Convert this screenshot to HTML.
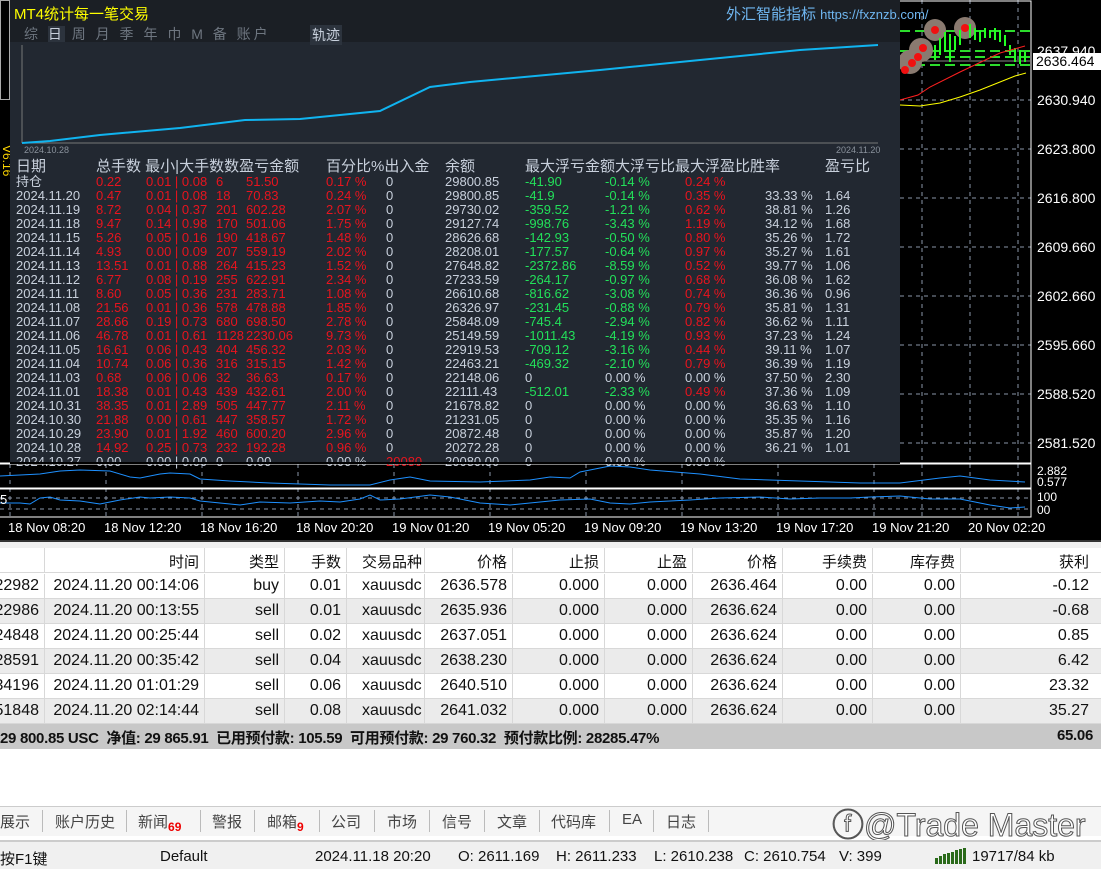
<!DOCTYPE html>
<html><head><meta charset="utf-8"><style>
*{margin:0;padding:0;box-sizing:border-box}
body{width:1101px;height:869px;overflow:hidden;background:#fff;position:relative;font-family:"Liberation Sans","Noto Sans CJK SC",sans-serif}
.a{position:absolute;white-space:nowrap}
.chart{left:0;top:0;width:1101px;height:540px;background:#000}
.px{color:#fff;font-size:14px;left:1037px}
.tl{color:#fff;font-size:13px;top:520px}
.st{font-size:13px;line-height:14px;color:#c8d0dc}
.r{color:#e8141e}.g{color:#22e05a}
.row{position:absolute;left:0;width:1101px;height:25px;border-bottom:1px solid #d8d8d8;font-size:16px;color:#111}
.row span{position:absolute;top:3px;text-align:right}
.tab{font-size:15px;color:#444;top:811px}
.sep{position:absolute;top:810px;width:1px;height:22px;background:#bbb}
.sb{font-size:15px;color:#111;top:848px}
</style></head><body>
<div class="a chart"></div>
<svg class="a" style="left:0;top:0" width="1101" height="540">
<g stroke="#8a96a8" stroke-dasharray="4,4" stroke-width="1">
<line x1="900" y1="100" x2="1031" y2="100"/><line x1="900" y1="149" x2="1031" y2="149"/><line x1="900" y1="198" x2="1031" y2="198"/><line x1="900" y1="247" x2="1031" y2="247"/><line x1="900" y1="296" x2="1031" y2="296"/><line x1="900" y1="345" x2="1031" y2="345"/><line x1="900" y1="394" x2="1031" y2="394"/><line x1="900" y1="443" x2="1031" y2="443"/>
<line x1="922" y1="0" x2="922" y2="517"/><line x1="970" y1="0" x2="970" y2="517"/><line x1="1018" y1="0" x2="1018" y2="517"/>
<line x1="10" y1="464" x2="10" y2="517"/><line x1="106" y1="464" x2="106" y2="517"/><line x1="202" y1="464" x2="202" y2="517"/><line x1="298" y1="464" x2="298" y2="517"/><line x1="394" y1="464" x2="394" y2="517"/><line x1="490" y1="464" x2="490" y2="517"/><line x1="586" y1="464" x2="586" y2="517"/><line x1="682" y1="464" x2="682" y2="517"/><line x1="778" y1="464" x2="778" y2="517"/><line x1="874" y1="464" x2="874" y2="517"/>
<line x1="0" y1="498" x2="1031" y2="498"/><line x1="0" y1="509" x2="1031" y2="509"/>
</g>
<g stroke="#fff" fill="none"><rect x="-1" y="1" width="1032" height="462"/><rect x="-1" y="464" width="1032" height="24"/><rect x="-1" y="489" width="1032" height="28"/></g>
<line x1="900" y1="61" x2="1031" y2="61" stroke="#888"/>
<g stroke="#2cdc2c" stroke-width="2" stroke-dasharray="10,5"><line x1="900" y1="31" x2="1031" y2="31"/><line x1="900" y1="51" x2="1031" y2="51"/><line x1="900" y1="57" x2="1031" y2="57"/><line x1="900" y1="65" x2="1031" y2="65"/></g>
<g fill="#8a7a70"><circle cx="935" cy="30" r="11"/><circle cx="965" cy="28" r="11"/><circle cx="921" cy="50" r="12"/><circle cx="910" cy="62" r="12"/></g>
<g stroke="#22ff22" stroke-width="2">
<line x1="935" y1="45" x2="935" y2="60"/><line x1="940" y1="38" x2="940" y2="55"/><line x1="945" y1="32" x2="945" y2="52"/><line x1="950" y1="34" x2="950" y2="62"/><line x1="955" y1="36" x2="955" y2="50"/><line x1="960" y1="30" x2="960" y2="45"/><line x1="970" y1="24" x2="970" y2="38"/><line x1="975" y1="28" x2="975" y2="40"/><line x1="980" y1="30" x2="980" y2="42"/><line x1="985" y1="28" x2="985" y2="38"/><line x1="990" y1="30" x2="990" y2="38"/><line x1="995" y1="28" x2="995" y2="40"/><line x1="1000" y1="30" x2="1000" y2="42"/><line x1="1005" y1="35" x2="1005" y2="46"/><line x1="1010" y1="45" x2="1010" y2="55"/><line x1="1015" y1="48" x2="1015" y2="62"/><line x1="1020" y1="50" x2="1020" y2="64"/><line x1="1025" y1="52" x2="1025" y2="62"/></g>
<g fill="#f01010"><circle cx="935" cy="30" r="4"/><circle cx="965" cy="28" r="4"/><circle cx="923" cy="48" r="4"/><circle cx="918" cy="57" r="4"/><circle cx="912" cy="63" r="4"/><circle cx="905" cy="70" r="4"/></g>
<polyline fill="none" stroke="#ff2020" points="900,100 918,95 930,87 960,72 1000,53 1025,46"/>
<polyline fill="none" stroke="#ffff00" points="900,105 920,106 940,103 960,97 980,90 1000,82 1015,76 1026,73"/>
<polyline fill="none" stroke="#1e90ff" points="0,476 40,474 60,471 80,470 110,471 130,477 140,478 160,474 170,473 190,474 200,479 230,481 270,483 330,485 370,485 390,480 410,477 430,481 480,482 530,480 550,477 570,478 580,472 610,466 630,467 650,470 700,474 740,479 800,481 860,483 900,483 940,478 960,476 990,480 1025,482"/>
<polyline fill="none" stroke="#1e90ff" points="0,503 20,503 30,504 40,498 50,497 60,500 80,501 100,504 120,500 140,497 150,498 170,497 190,498 200,501 220,503 240,505 260,502 290,503 320,501 340,502 360,499 370,495 380,500 400,499 430,495 450,497 480,503 510,505 540,502 560,500 590,499 610,503 630,504 650,502 690,500 720,498 760,497 790,499 820,498 850,498 870,497 900,496 930,499 960,499 990,505 1010,508 1025,507"/>
<line x1="0" y1="517" x2="1031" y2="517" stroke="#fff"/>
</svg>
<div class="a px" style="top:43px">2637.940</div>
<div class="a" style="left:1033px;top:53px;width:68px;height:17px;background:#fff;color:#000;font-size:14px;padding-left:3px">2636.464</div>
<div class="a px" style="top:92px">2630.940</div>
<div class="a px" style="top:141px">2623.800</div>
<div class="a px" style="top:190px">2616.800</div>
<div class="a px" style="top:239px">2609.660</div>
<div class="a px" style="top:288px">2602.660</div>
<div class="a px" style="top:337px">2595.660</div>
<div class="a px" style="top:386px">2588.520</div>
<div class="a px" style="top:435px">2581.520</div>
<div class="a px" style="top:466px;font-size:12px;line-height:11px">2.882<br>0.577</div>
<div class="a px" style="top:491px;font-size:12px;line-height:13px">100<br>00</div>
<div class="a tl" style="left:8px">18 Nov 08:20</div><div class="a tl" style="left:104px">18 Nov 12:20</div><div class="a tl" style="left:200px">18 Nov 16:20</div><div class="a tl" style="left:296px">18 Nov 20:20</div><div class="a tl" style="left:392px">19 Nov 01:20</div><div class="a tl" style="left:488px">19 Nov 05:20</div><div class="a tl" style="left:584px">19 Nov 09:20</div><div class="a tl" style="left:680px">19 Nov 13:20</div><div class="a tl" style="left:776px">19 Nov 17:20</div><div class="a tl" style="left:872px">19 Nov 21:20</div><div class="a tl" style="left:968px">20 Nov 02:20</div>
<div class="a" style="left:0;top:492px;color:#fff;font-size:13px">5</div>
<div class="a" style="left:0;top:0;width:10px;height:100px;border:1px solid #aaa;background:#000"></div>
<div class="a" style="left:0;top:145px;color:#ffd700;font-size:12px;writing-mode:vertical-rl">V6.16</div>
<div class="a" style="left:10px;top:0;width:890px;height:462px;background:#222831"></div>
<div class="a" style="left:10px;top:0;width:890px;height:42px;background:#1b1f25"></div>
<div class="a" style="left:14px;top:3px;color:#ffff00;font-size:15px">MT4统计每一笔交易</div>
<div class="a" style="left:24px;top:24px;color:#6e7680;font-size:14px;letter-spacing:3px">综 <span style="background:#2c333d;color:#c8d0dc">日</span> 周 月 季 年 巾 M 备 账户</div>
<div class="a" style="left:310px;top:25px;color:#c8d0dc;font-size:14px;background:#2c333d;padding:0 2px">轨迹</div>
<div class="a" style="left:726px;top:3px;color:#6fb6f0;font-size:15px">外汇智能指标 <span style="font-size:13px">https://fxznzb.com/</span></div>
<svg class="a" style="left:0;top:0" width="900" height="160">
<line x1="22" y1="45" x2="22" y2="143" stroke="#777"/><line x1="22" y1="143" x2="878" y2="143" stroke="#777"/>
<polyline fill="none" stroke="#10b4f0" stroke-width="2" points="22,143 50,141 100,135 180,128 245,120 300,119 380,111 430,87 470,82 600,70 700,60 800,50 878,45"/>
</svg>
<div class="a" style="left:24px;top:145px;color:#8a929c;font-size:9px">2024.10.28</div>
<div class="a" style="left:836px;top:145px;color:#8a929c;font-size:9px">2024.11.20</div>
<div class="a st" style="left:16px;top:159px;font-size:15px;line-height:15px">日期</div>
<div class="a st" style="left:96px;top:159px;font-size:15px;line-height:15px">总手数 最小|大手数数盈亏金额</div>
<div class="a st" style="left:326px;top:159px;font-size:15px;line-height:15px">百分比%出入金</div>
<div class="a st" style="left:445px;top:159px;font-size:15px;line-height:15px">余额</div>
<div class="a st" style="left:525px;top:159px;font-size:15px;line-height:15px">最大浮亏金额大浮亏比最大浮盈比胜率</div>
<div class="a st" style="left:825px;top:159px;font-size:15px;line-height:15px">盈亏比</div>
<div id="S"></div>
<script>
var d=[["持仓","0.22","0.01 | 0.08","6","51.50","0.17 %","0","29800.85","-41.90","-0.14 %","0.24 %","",""],
["2024.11.20","0.47","0.01 | 0.08","18","70.83","0.24 %","0","29800.85","-41.9","-0.14 %","0.35 %","33.33 %","1.64"],
["2024.11.19","8.72","0.04 | 0.37","201","602.28","2.07 %","0","29730.02","-359.52","-1.21 %","0.62 %","38.81 %","1.26"],
["2024.11.18","9.47","0.14 | 0.98","170","501.06","1.75 %","0","29127.74","-998.76","-3.43 %","1.19 %","34.12 %","1.68"],
["2024.11.15","5.26","0.05 | 0.16","190","418.67","1.48 %","0","28626.68","-142.93","-0.50 %","0.80 %","35.26 %","1.72"],
["2024.11.14","4.93","0.00 | 0.09","207","559.19","2.02 %","0","28208.01","-177.57","-0.64 %","0.97 %","35.27 %","1.61"],
["2024.11.13","13.51","0.01 | 0.88","264","415.23","1.52 %","0","27648.82","-2372.86","-8.59 %","0.52 %","39.77 %","1.06"],
["2024.11.12","6.77","0.08 | 0.19","255","622.91","2.34 %","0","27233.59","-264.17","-0.97 %","0.68 %","36.08 %","1.62"],
["2024.11.11","8.60","0.05 | 0.36","231","283.71","1.08 %","0","26610.68","-816.62","-3.08 %","0.74 %","36.36 %","0.96"],
["2024.11.08","21.56","0.01 | 0.36","578","478.88","1.85 %","0","26326.97","-231.45","-0.88 %","0.79 %","35.81 %","1.31"],
["2024.11.07","28.66","0.19 | 0.73","680","698.50","2.78 %","0","25848.09","-745.4","-2.94 %","0.82 %","36.62 %","1.11"],
["2024.11.06","46.78","0.01 | 0.61","1128","2230.06","9.73 %","0","25149.59","-1011.43","-4.19 %","0.93 %","37.23 %","1.24"],
["2024.11.05","16.61","0.06 | 0.43","404","456.32","2.03 %","0","22919.53","-709.12","-3.16 %","0.44 %","39.11 %","1.07"],
["2024.11.04","10.74","0.06 | 0.36","316","315.15","1.42 %","0","22463.21","-469.32","-2.10 %","0.79 %","36.39 %","1.19"],
["2024.11.03","0.68","0.06 | 0.06","32","36.63","0.17 %","0","22148.06","0","0.00 %","0.00 %","37.50 %","2.30"],
["2024.11.01","18.38","0.01 | 0.43","439","432.61","2.00 %","0","22111.43","-512.01","-2.33 %","0.49 %","37.36 %","1.09"],
["2024.10.31","38.35","0.01 | 2.89","505","447.77","2.11 %","0","21678.82","0","0.00 %","0.00 %","36.63 %","1.10"],
["2024.10.30","21.88","0.00 | 0.61","447","358.57","1.72 %","0","21231.05","0","0.00 %","0.00 %","35.35 %","1.16"],
["2024.10.29","23.90","0.01 | 1.92","460","600.20","2.96 %","0","20872.48","0","0.00 %","0.00 %","35.87 %","1.20"],
["2024.10.28","14.92","0.25 | 0.73","232","192.28","0.96 %","0","20272.28","0","0.00 %","0.00 %","36.21 %","1.01"],
["2024.10.27","0.00","0.00 | 0.00","0","0.00","0.00 %","20080","20080.00","0","0.00 %","0.00 %","",""]];
var xs=[16,96,146,216,246,326,386,445,525,605,685,765,825],h="";
d.forEach(function(r,i){var y=175+i*14;r.forEach(function(t,j){var c="";
if(j>=1&&j<=5)c="r";if(j==6&&t!="0")c="r";if((j==8||j==9)&&t!="0"&&t!="0.00 %")c="g";if(j==10&&t!="0.00 %")c="r";
if(i==20&&j<6)c="";
h+='<div class="a st '+c+'" style="left:'+xs[j]+'px;top:'+y+'px">'+t+'</div>';});});
document.getElementById("S").innerHTML=h;
</script>
<div class="a" style="left:10px;top:462px;width:890px;height:2px;background:#000"></div>
<div class="a" style="left:0;top:540px;width:1101px;height:8px;background:#f0f0f0;border-top:2px solid #333"></div>
<div id="T"></div>
<script>
var cols=[44,204,284,346,424,512,604,692,782,872,960,1094];
var hd=["","时间","类型","手数","交易品种","价格","止损","止盈","价格","手续费","库存费","获利"];
var rows=[["22982","2024.11.20 00:14:06","buy","0.01","xauusdc","2636.578","0.000","0.000","2636.464","0.00","0.00","-0.12"],
["22986","2024.11.20 00:13:55","sell","0.01","xauusdc","2635.936","0.000","0.000","2636.624","0.00","0.00","-0.68"],
["24848","2024.11.20 00:25:44","sell","0.02","xauusdc","2637.051","0.000","0.000","2636.624","0.00","0.00","0.85"],
["28591","2024.11.20 00:35:42","sell","0.04","xauusdc","2638.230","0.000","0.000","2636.624","0.00","0.00","6.42"],
["34196","2024.11.20 01:01:29","sell","0.06","xauusdc","2640.510","0.000","0.000","2636.624","0.00","0.00","23.32"],
["51848","2024.11.20 02:14:44","sell","0.08","xauusdc","2641.032","0.000","0.000","2636.624","0.00","0.00","35.27"]];
function mk(r,y,bg,hdr){var s='<div class="row" style="top:'+y+'px;background:'+bg+(hdr?';font-size:15px':'')+'">';var p=-10;
r.forEach(function(t,j){var R=cols[j];
if(j==4)s+='<span style="left:'+(p+16)+'px;text-align:left">'+t+'</span>';else s+='<span style="right:'+(1101-R+5)+'px">'+t+'</span>';
if(j<11)s+='<i style="position:absolute;left:'+R+'px;top:0;width:1px;height:25px;background:#d8d8d8"></i>';p=R;});return s+'</div>';}
var o=mk(hd,548,"#fff",1);rows.forEach(function(r,i){o+=mk(r,574+i*25,i%2?"#ebebeb":"#fff");});
document.getElementById("T").innerHTML=o;
</script>
<div class="a" style="left:0;top:724px;width:1101px;height:25px;background:#c8c8c8;font-size:15px;font-weight:bold;color:#111;padding-top:3px;letter-spacing:-0.3px">29 800.85 USC&nbsp; 净值: 29 865.91&nbsp; 已用预付款: 105.59&nbsp; 可用预付款: 29 760.32&nbsp; 预付款比例: 28285.47%<span style="position:absolute;right:8px">65.06</span></div>
<div class="a" style="left:0;top:806px;width:1101px;height:30px;background:#f5f5f5;border-top:1px solid #ccc"></div>
<div class="a tab" style="left:0">展示</div><div class="a tab" style="left:55px">账户历史</div><div class="a tab" style="left:138px">新闻<sub style="color:#e00;font-size:12px;font-weight:bold">69</sub></div><div class="a tab" style="left:212px">警报</div><div class="a tab" style="left:267px">邮箱<sub style="color:#e00;font-size:12px;font-weight:bold">9</sub></div><div class="a tab" style="left:331px">公司</div><div class="a tab" style="left:387px">市场</div><div class="a tab" style="left:442px">信号</div><div class="a tab" style="left:497px">文章</div><div class="a tab" style="left:551px">代码库</div><div class="a tab" style="left:622px">EA</div><div class="a tab" style="left:666px">日志</div>
<i class="sep" style="left:42px"></i><i class="sep" style="left:126px"></i><i class="sep" style="left:200px"></i><i class="sep" style="left:254px"></i><i class="sep" style="left:319px"></i><i class="sep" style="left:374px"></i><i class="sep" style="left:429px"></i><i class="sep" style="left:484px"></i><i class="sep" style="left:539px"></i><i class="sep" style="left:609px"></i><i class="sep" style="left:653px"></i><i class="sep" style="left:708px"></i>
<div class="a" style="left:832px;top:800px;font-size:32px;color:#fff;-webkit-text-stroke:1px #555">ⓕ@Trade Master</div>
<div class="a" style="left:0;top:840px;width:1101px;height:29px;background:#f0f0f0;border-top:2px solid #ccc"></div>
<div class="a sb" style="left:0">按F1键</div><div class="a sb" style="left:160px">Default</div><div class="a sb" style="left:315px">2024.11.18 20:20</div><div class="a sb" style="left:458px">O: 2611.169</div><div class="a sb" style="left:556px">H: 2611.233</div><div class="a sb" style="left:654px">L: 2610.238</div><div class="a sb" style="left:744px">C: 2610.754</div><div class="a sb" style="left:839px">V: 399</div>
<svg class="a" style="left:935px;top:848px" width="34" height="16"><g fill="#2a6a1a"><rect x="0" y="10" width="3" height="6"/><rect x="4" y="8" width="3" height="8"/><rect x="8" y="6" width="3" height="10"/><rect x="12" y="5" width="3" height="11"/><rect x="16" y="4" width="3" height="12"/><rect x="20" y="2" width="3" height="14"/><rect x="24" y="1" width="3" height="15"/><rect x="28" y="0" width="3" height="16"/></g></svg>
<div class="a sb" style="left:972px">19717/84 kb</div>
</body></html>
